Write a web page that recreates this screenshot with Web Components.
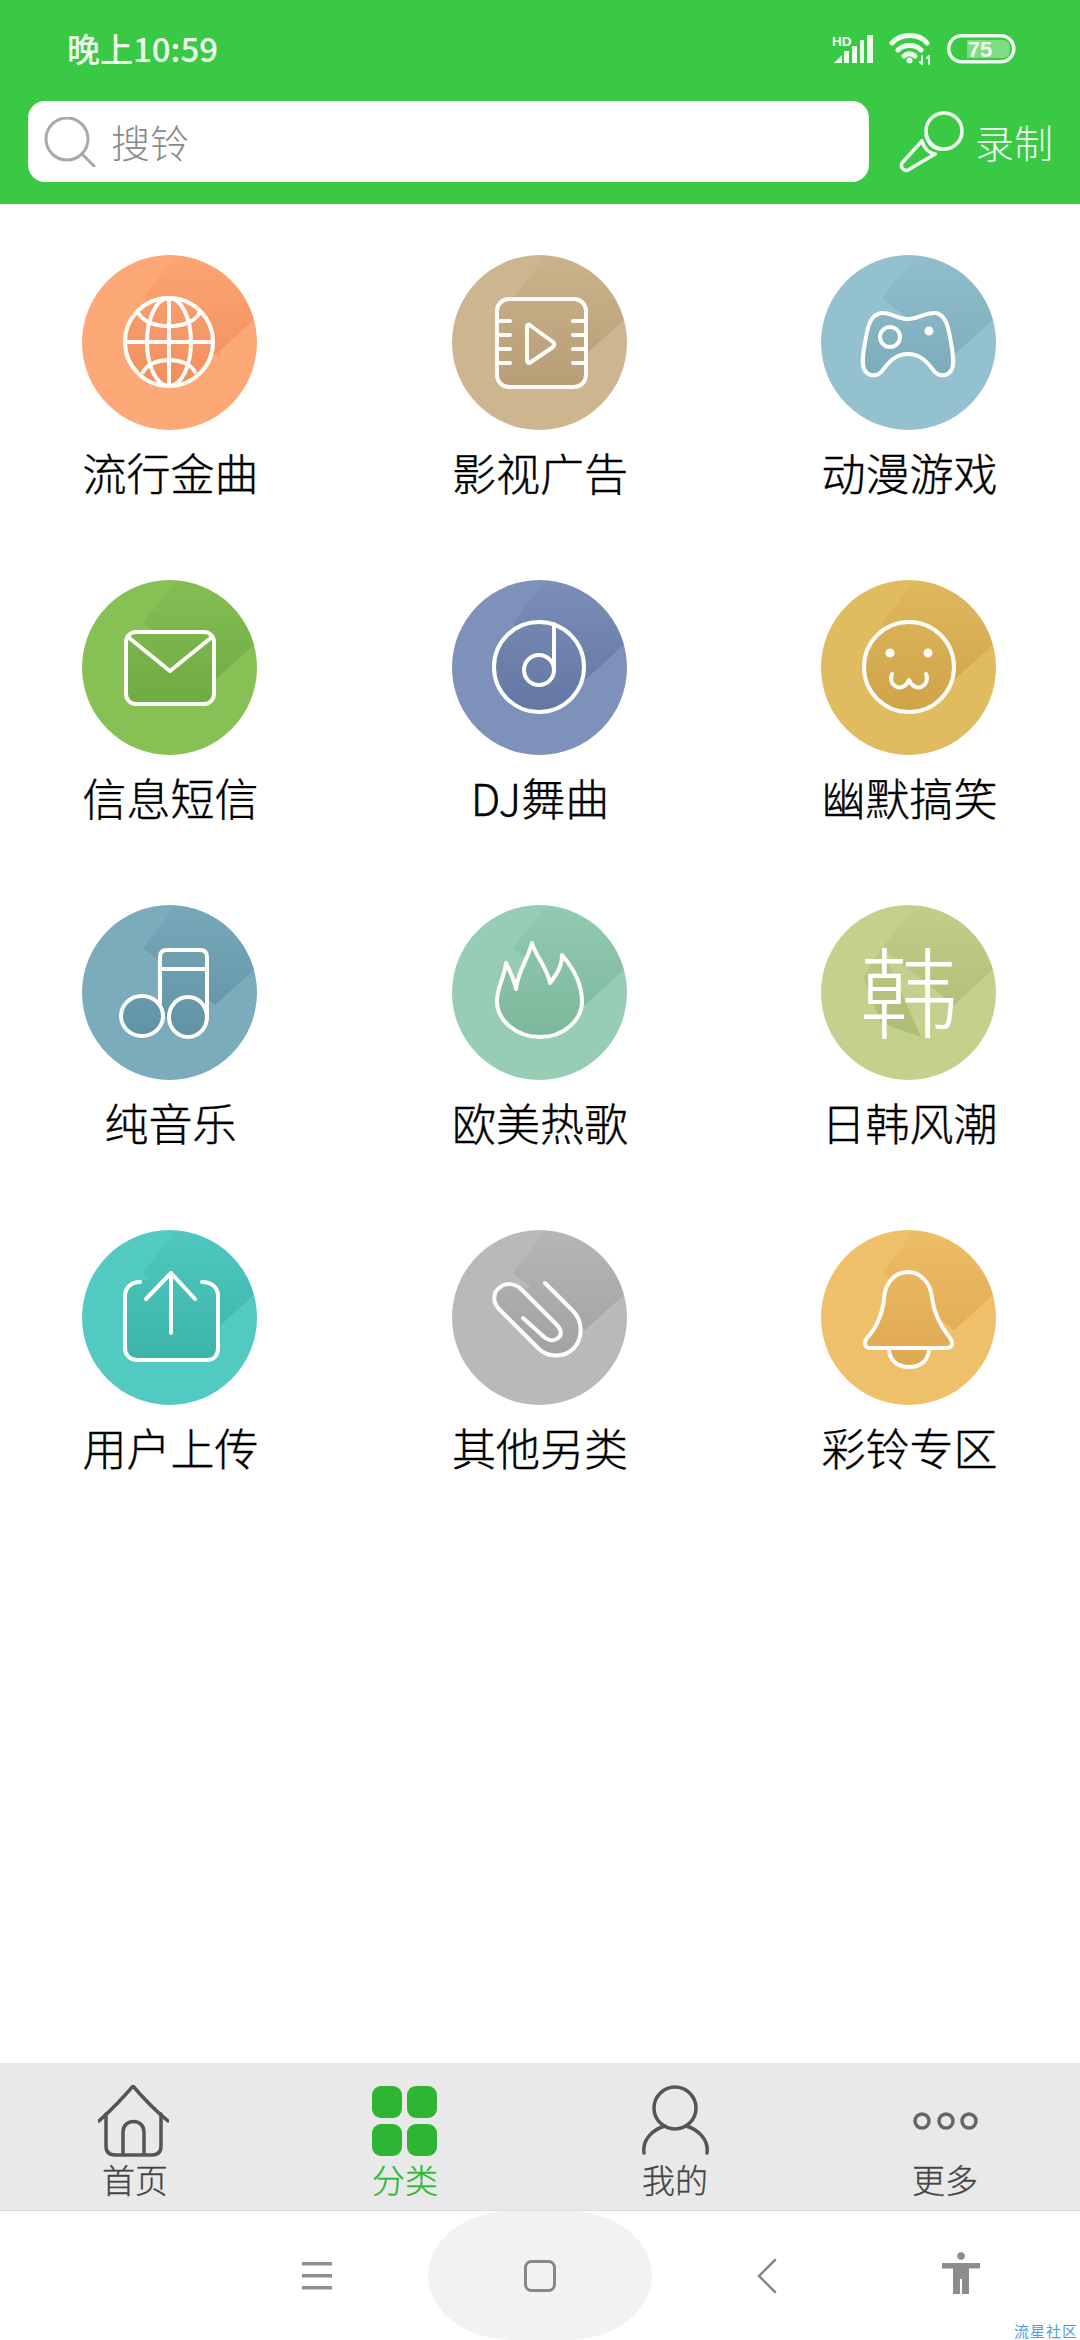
<!DOCTYPE html>
<html lang="zh">
<head>
<meta charset="utf-8">
<title>铃声分类</title>
<style>
    html, body { margin: 0; padding: 0; background: #fff; }
    body { font-family: "Noto Sans CJK SC", "Noto Sans", sans-serif; }
</style>
</head>
<body>
<app-shell>
    <search-header slot="top"></search-header>
    <category-grid>
        <category-tile icon="globe" color="#fda877">流行金曲</category-tile>
        <category-tile icon="video" color="#cdb68f">影视广告</category-tile>
        <category-tile icon="gamepad" color="#94c1cf">动漫游戏</category-tile>
        <category-tile icon="mail" color="#87c156">信息短信</category-tile>
        <category-tile icon="disc" color="#7d91bb">DJ舞曲</category-tile>
        <category-tile icon="smile" color="#e1bb60">幽默搞笑</category-tile>
        <category-tile icon="music" color="#7aacbc">纯音乐</category-tile>
        <category-tile icon="flame" color="#96cdb4">欧美热歌</category-tile>
        <category-tile icon="han" color="#c4d18d">日韩风潮</category-tile>
        <category-tile icon="upload" color="#52cac1">用户上传</category-tile>
        <category-tile icon="clip" color="#b9b9b9">其他另类</category-tile>
        <category-tile icon="bell" color="#efc06a">彩铃专区</category-tile>
    </category-grid>
    <tab-bar slot="bottom">
        <tab-item icon="home">首页</tab-item>
        <tab-item icon="grid" active>分类</tab-item>
        <tab-item icon="user">我的</tab-item>
        <tab-item icon="more">更多</tab-item>
    </tab-bar>
    <nav-bar slot="bottom"></nav-bar>
</app-shell>

<script>
// shapes are in the 175x175 box of the circle
const GAMEPAD = 'M60 58C70 57 76 64 87 64C98 64 104 57 115 58C124 60 127 70 129 82C131 94 134 106 131 114C127 122 118 122 113 116C107 108 100 99 87 99C74 99 67 108 61 116C56 122 47 122 43 114C40 106 43 94 45 82C47 70 50 60 60 58Z';
const FLAME = 'M80 38C84 52 95 62 98 78C104 70 110 62 110 50C122 64 130 80 130 96C130 116 111 132 88 132C65 132 45 116 45 96C45 82 52 74 54 58C58 66 62 74 64 84C66 66 76 54 80 38Z';
const BELL = 'M87 42C73 42 64 54 63 68C62 84 54 100 46 108C42 114 44 118 50 118H125C131 118 133 114 129 108C121 98 113 84 111 68C110 54 100 42 87 42Z';

const ICONS = {
    globe: {
        sil: '<circle cx="87" cy="87" r="44"/>',
        draw: `<circle cx="87" cy="87" r="44"/><ellipse cx="87" cy="87" rx="22" ry="44"/>
               <path d="M87 43V131M43 87H131M56 57C64 76 110 76 118 57M61 117C69 101 105 101 113 117"/>`
    },
    video: {
        sil: '<rect x="45" y="44" width="89" height="88" rx="12"/>',
        draw: `<rect x="45" y="44" width="89" height="88" rx="12"/>
               <path d="M46 66H58M46 80H58M46 94H58M46 108H58M121 66H133M121 80H133M121 94H133M121 108H133"/>
               <path d="M75 72C75 69 77 69 79 71L101 87C103 89 103 90 101 92L79 107C77 109 75 108 75 105Z"/>`
    },
    gamepad: {
        sil: `<path d="${GAMEPAD}"/>`,
        draw: `<path d="${GAMEPAD}"/><circle cx="69" cy="82" r="10"/><circle cx="108" cy="76" r="2.500" fill="#fff"/>`
    },
    mail: {
        sil: '<rect x="44" y="52" width="88" height="72" rx="10"/>',
        draw: `<rect x="44" y="52" width="88" height="72" rx="10"/><path d="M46 57L88 91L130 57"/>`
    },
    disc: {
        sil: '<circle cx="87" cy="87" r="45"/>',
        draw: `<circle cx="87" cy="87" r="45"/><ellipse cx="87" cy="90" rx="15" ry="15"/><path d="M102 44V90"/>`
    },
    smile: {
        sil: '<circle cx="88" cy="87" r="45"/>',
        draw: `<circle cx="88" cy="87" r="45"/><circle cx="69" cy="73" r="2.500" fill="#fff"/><circle cx="107" cy="73" r="2.500" fill="#fff"/>
               <path d="M71 94C66 106 82 114 88 100C94 114 110 106 105 94"/>`
    },
    music: {
        sil: `<circle cx="61" cy="111" r="20"/><circle cx="106" cy="112" r="19"/><path d="M77 100V52Q77 45 84 45H118Q125 45 125 52V112H77Z"/>`,
        draw: `<ellipse cx="60" cy="111" rx="21" ry="20"/><ellipse cx="106" cy="112" rx="19" ry="20"/>
               <path d="M78 98V52Q78 45 85 45H118Q125 45 125 52V112M78 64H125"/>`
    },
    flame: {
        sil: `<path d="${FLAME}"/>`,
        draw: `<path d="${FLAME}"/>`
    },
    han: {
        sil: '<polygon points="42,72 61,43 100,132 60,118"/>',
        draw: '<text x="88" y="125" text-anchor="middle" font-size="98" font-weight="300" fill="#fff" stroke="none" font-family="Noto Sans CJK SC, sans-serif">韩</text>'
    },
    upload: {
        sil: '<path d="M43 65Q43 52 58 52L89 43L120 52Q136 52 136 65V118Q136 130 125 130H55Q43 130 43 118Z"/>',
        draw: `<path d="M58 52C49 52 43 58 43 66V118C43 125 48 130 55 130H125C132 130 136 125 136 118V66C136 58 130 52 120 52"/>
               <path d="M64 69L89 43L113 69M89 43V103"/>`
    },
    clip: {
        sil: '<path d="M93 53L121 81C131 91 131 108 122 118C112 128 96 128 86 118L48 80C40 72 41 63 47 58C54 52 63 53 70 60Z"/>',
        draw: '<path d="M93 53L121 81C131 91 131 108 122 118C112 128 96 128 86 118L48 80C40 72 41 63 47 58C54 52 63 53 70 60L104 94C110 100 110 105 106 108C101 112 95 110 91 106L71 88"/>'
    },
    bell: {
        sil: `<path d="${BELL}"/><path d="M68 118C68 130 76 137 88 137C100 137 108 130 108 118Z"/>`,
        draw: `<path d="${BELL}"/><path d="M68 118C68 130 76 137 88 137C100 137 108 130 108 118"/>`
    }
};

const TAB_ICONS = {
    home: `<svg style="margin-left:-3px" width="71" height="72" viewBox="0 0 71 72" fill="none" stroke="#555" stroke-width="3.500" stroke-linecap="round" stroke-linejoin="round">
        <path d="M1 36C12 26 24 14 35 1C46 14 58 26 70 36"/>
        <path d="M8 29V61Q8 70 17 70H54Q63 70 63 61V29M25 70V47C25 33 46 33 46 47V70"/></svg>`,
    grid: `<svg width="66" height="72" viewBox="0 0 66 72" fill="#2fb534">
        <rect x="0" y="1" width="30" height="32" rx="9"/><rect x="35" y="1" width="30" height="32" rx="9"/>
        <rect x="0" y="39" width="30" height="32" rx="9"/><rect x="35" y="39" width="30" height="32" rx="9"/></svg>`,
    user: `<svg width="67" height="72" viewBox="0 0 67 72" fill="none" stroke="#555" stroke-width="3.500" stroke-linecap="round">
        <ellipse cx="33" cy="23" rx="21" ry="21"/>
        <path d="M2 68C0 54 12 44 23 41M65 68C67 54 55 44 44 41"/></svg>`,
    more: `<svg style="margin-left:2px" width="66" height="72" viewBox="0 0 66 72" fill="none" stroke="#666" stroke-width="3.500">
        <g transform="translate(0 27)"><circle cx="9" cy="9" r="7"/><circle cx="33" cy="9" r="7"/><circle cx="56" cy="9" r="7"/></g></svg>`
};

// darker tone of a circle colour, used for the cast shadow
function shadeOf(hex) {
    const parts = [1, 3, 5].map(i => parseInt(hex.substr(i, 2), 16));
    return 'rgb(' + parts.map(v => Math.round(v * v / 255 * 0.88)).join(',') + ')';
}

class AppShell extends HTMLElement {
    constructor() {
        super();
        this.attachShadow({ mode: 'open' });
    }

    connectedCallback() {
        this.shadowRoot.innerHTML = `
            <style>
                :host {
                    display: flex;
                    flex-direction: column;
                    width: 1080px;
                    height: 2340px;
                    overflow: hidden;
                    position: relative;
                    background: #fff;
                }
                main { flex: 1; }
            </style>
            <slot name="top"></slot>
            <main><slot></slot></main>
            <slot name="bottom"></slot>
        `;
    }
}

class SearchHeader extends HTMLElement {
    constructor() {
        super();
        this.attachShadow({ mode: 'open' });
    }

    connectedCallback() {
        this.shadowRoot.innerHTML = `
            <style>
                :host {
                    display: block;
                    height: 204px;
                    background: #3ac944;
                    color: #eefcee;
                    font-family: "Noto Sans CJK SC", sans-serif;
                }
                .status {
                    display: flex;
                    align-items: center;
                    height: 101px;
                    padding: 0 64px 0 67px;
                    box-sizing: border-box;
                }
                .time { font-size: 33px; font-weight: 500; line-height: 40px; flex: 1; margin-top: -5px; }
                .status svg { display: block; }
                .icons { display: flex; align-items: center; margin-top: -4px; }
                .row { display: flex; align-items: center; padding-left: 28px; }
                .box {
                    display: flex;
                    align-items: center;
                    width: 841px;
                    height: 81px;
                    background: #fff;
                    border-radius: 17px;
                    color: #8a8a8a;
                    font-size: 39px;
                    font-weight: 300;
                }
                .box svg { margin-left: 16px; }
                .box span { margin-left: 15px; margin-top: -2px; }
                .mic { margin-left: 30px; display: block; }
                .rec { margin-left: 11px; margin-top: -2px; font-size: 39px; font-weight: 300; color: #f2fdf2; }
            </style>
            <div class="status">
                <span class="time">晚上10:59</span>
                <div class="icons">
                    <svg width="42" height="30" viewBox="0 0 42 30" fill="#eefcee">
                        <text x="0" y="12" font-size="13.5" font-weight="700" font-family="Liberation Sans, sans-serif">HD</text>
                        <path d="M2 29L10 21V29ZM12 17H17V29H12ZM20 12H25V29H20ZM28 6H32V29H28ZM35 1H41V29H35Z"/>
                    </svg>
                    <svg style="margin-left:15px" width="43" height="33" viewBox="0 0 43 33" fill="none" stroke="#eefcee" stroke-width="5" stroke-linecap="round">
                        <path d="M3 11C12 1 30 1 38 11M9 18C15 12 26 12 32 18M15 24C18 21 23 21 26 24"/>
                        <circle cx="20.500" cy="28.500" r="3" fill="#eefcee" stroke="none"/>
                        <path stroke-width="1.800" d="M33 24V32M31 30L33 32M40 24V32M40 24L38 26"/>
                    </svg>
                    <svg style="margin-left:15px" width="69" height="30" viewBox="0 0 69 30">
                        <rect x="1.750" y="1.750" width="65" height="26" rx="13" fill="none" stroke="#eefcee" stroke-width="3.500"/>
                        <path d="M20 6H56Q63 6 63 15Q63 24 56 24H20Z" fill="#fff" fill-opacity=".35"/>
                        <text x="33" y="23" text-anchor="middle" font-size="22" font-weight="700" fill="#eefcee" font-family="Liberation Sans, sans-serif">75</text>
                    </svg>
                </div>
            </div>
            <div class="row">
                <div class="box">
                    <svg width="52" height="50" viewBox="0 0 52 50" fill="none" stroke="#a9a9a9" stroke-width="3" stroke-linecap="round">
                        <circle cx="23" cy="22" r="21"/><path d="M38 37L50 49"/>
                    </svg>
                    <span>搜铃</span>
                </div>
                <svg class="mic" width="65" height="62" viewBox="0 0 65 62" fill="none" stroke="#f2fdf2" stroke-width="3.500" stroke-linejoin="round" stroke-linecap="round">
                    <circle cx="45" cy="20" r="18"/>
                    <path d="M27 24C29 32 33 37 41 38M23 30C25 37 30 42 36 43"/>
                    <path d="M23 30L3 52C1 56 5 61 9 59L36 43"/>
                </svg>
                <span class="rec">录制</span>
            </div>
        `;
    }
}

class CategoryGrid extends HTMLElement {
    constructor() {
        super();
        this.attachShadow({ mode: 'open' });
    }

    connectedCallback() {
        this.shadowRoot.innerHTML = `
            <style>
                :host {
                    display: grid;
                    grid-template-columns: repeat(3, 175px);
                    justify-content: space-between;
                    row-gap: 77px;
                    padding: 51px 84px 0 82px;
                }
            </style>
            <slot></slot>
        `;
    }
}

class CategoryTile extends HTMLElement {
    constructor() {
        super();
        this.attachShadow({ mode: 'open' });
    }

    connectedCallback() {
        const icon = ICONS[this.getAttribute('icon')];
        const color = this.getAttribute('color');
        this.shadowRoot.innerHTML = `
            <style>
                :host {
                    display: flex;
                    flex-direction: column;
                    align-items: center;
                    width: 175px;
                }
                svg { display: block; }
                .label {
                    margin: 12px 0 1px 2px;
                    font-size: 44px;
                    font-weight: 300;
                    -webkit-text-stroke: 0.4px #000;
                    line-height: 60px;
                    color: #000;
                    white-space: nowrap;
                }
            </style>
            <svg width="175" height="175" viewBox="0 0 175 175">
                <defs>
                    <clipPath id="round"><circle cx="87.500" cy="87.500" r="87.500"/></clipPath>
                    <linearGradient id="shade" gradientUnits="userSpaceOnUse" x1="0" y1="0" x2="0" y2="135">
                        <stop offset="0" stop-color="${shadeOf(color)}" stop-opacity=".04"/>
                        <stop offset="1" stop-color="${shadeOf(color)}" stop-opacity=".36"/>
                    </linearGradient>
                    <mask id="cast">
                        <g fill="#fff">
                            <polygon points="94,0 175,0 175,62 133,100 61,43"/>
                            ${icon.sil}
                        </g>
                    </mask>
                </defs>
                <circle cx="87.500" cy="87.500" r="87.500" fill="${color}"/>
                <g clip-path="url(#round)"><rect width="175" height="175" fill="url(#shade)" mask="url(#cast)"/></g>
                <g fill="none" stroke="#fffdf9" stroke-width="4" stroke-linecap="round" stroke-linejoin="round">${icon.draw}</g>
            </svg>
            <div class="label"><slot></slot></div>
        `;
    }
}

class TabBar extends HTMLElement {
    constructor() {
        super();
        this.attachShadow({ mode: 'open' });
    }

    connectedCallback() {
        this.shadowRoot.innerHTML = `
            <style>
                :host {
                    display: grid;
                    grid-template-columns: repeat(4, 1fr);
                    height: 148px;
                    box-sizing: border-box;
                    padding-top: 22px;
                    background: #e9e9e9;
                    border-bottom: 1px solid #dcdcdc;
                }
            </style>
            <slot></slot>
        `;
    }
}

class TabItem extends HTMLElement {
    constructor() {
        super();
        this.attachShadow({ mode: 'open' });
    }

    connectedCallback() {
        const active = this.hasAttribute('active');
        this.shadowRoot.innerHTML = `
            <style>
                :host {
                    display: flex;
                    flex-direction: column;
                    align-items: center;
                    color: ${active ? '#2fb534' : '#444'};
                }
                svg { display: block; }
                .label { margin-top: 2px; font-size: 33px; font-weight: 300; line-height: 40px; -webkit-text-stroke: 0.3px currentColor; }
            </style>
            ${TAB_ICONS[this.getAttribute('icon')]}
            <div class="label"><slot></slot></div>
        `;
    }
}

class NavBar extends HTMLElement {
    constructor() {
        super();
        this.attachShadow({ mode: 'open' });
    }

    connectedCallback() {
        this.shadowRoot.innerHTML = `
            <style>
                :host {
                    display: grid;
                    grid-template-columns: 224px 224px 230px 156px;
                    height: 129px;
                    padding-left: 204px;
                    background: #fff;
                    position: relative;
                }
                div { display: flex; align-items: center; justify-content: center; }
                .home { background: #f2f2f2; border-radius: 84px / 64.5px; }
                svg { display: block; }
                .mark {
                    position: absolute;
                    right: 2px;
                    bottom: 1px;
                    font-size: 15px;
                    line-height: 16px;
                    letter-spacing: 1px;
                    color: #4a9be8;
                    white-space: nowrap;
                }
            </style>
            <div><svg style="margin-left:2px" width="30" height="28" viewBox="0 0 30 28" fill="#8f8f8f"><rect y="0" width="30" height="3.500"/><rect y="12" width="30" height="3.500"/><rect y="24" width="30" height="3.500"/></svg></div>
            <div class="home"><svg width="32" height="32" viewBox="0 0 32 32" fill="none" stroke="#888" stroke-width="3"><rect x="1.500" y="1.500" width="29" height="29" rx="6"/></svg></div>
            <div><svg width="20" height="34" viewBox="0 0 20 34" fill="none" stroke="#888" stroke-width="2.500" stroke-linecap="round"><path d="M18 1L2 17L18 33"/></svg></div>
            <div><svg style="margin:-5px 0 0 2px" width="38" height="42" viewBox="0 0 38 42" fill="#8c8c8c"><circle cx="19" cy="4" r="3.800"/><rect x="0" y="11" width="38" height="5.500"/><path d="M11 16H27V42H20V27H18V42H11Z"/></svg></div>
            <span class="mark">流星社区</span>
        `;
    }
}

customElements.define('app-shell', AppShell);
customElements.define('search-header', SearchHeader);
customElements.define('category-grid', CategoryGrid);
customElements.define('category-tile', CategoryTile);
customElements.define('tab-bar', TabBar);
customElements.define('tab-item', TabItem);
customElements.define('nav-bar', NavBar);
</script>
</body>
</html>
